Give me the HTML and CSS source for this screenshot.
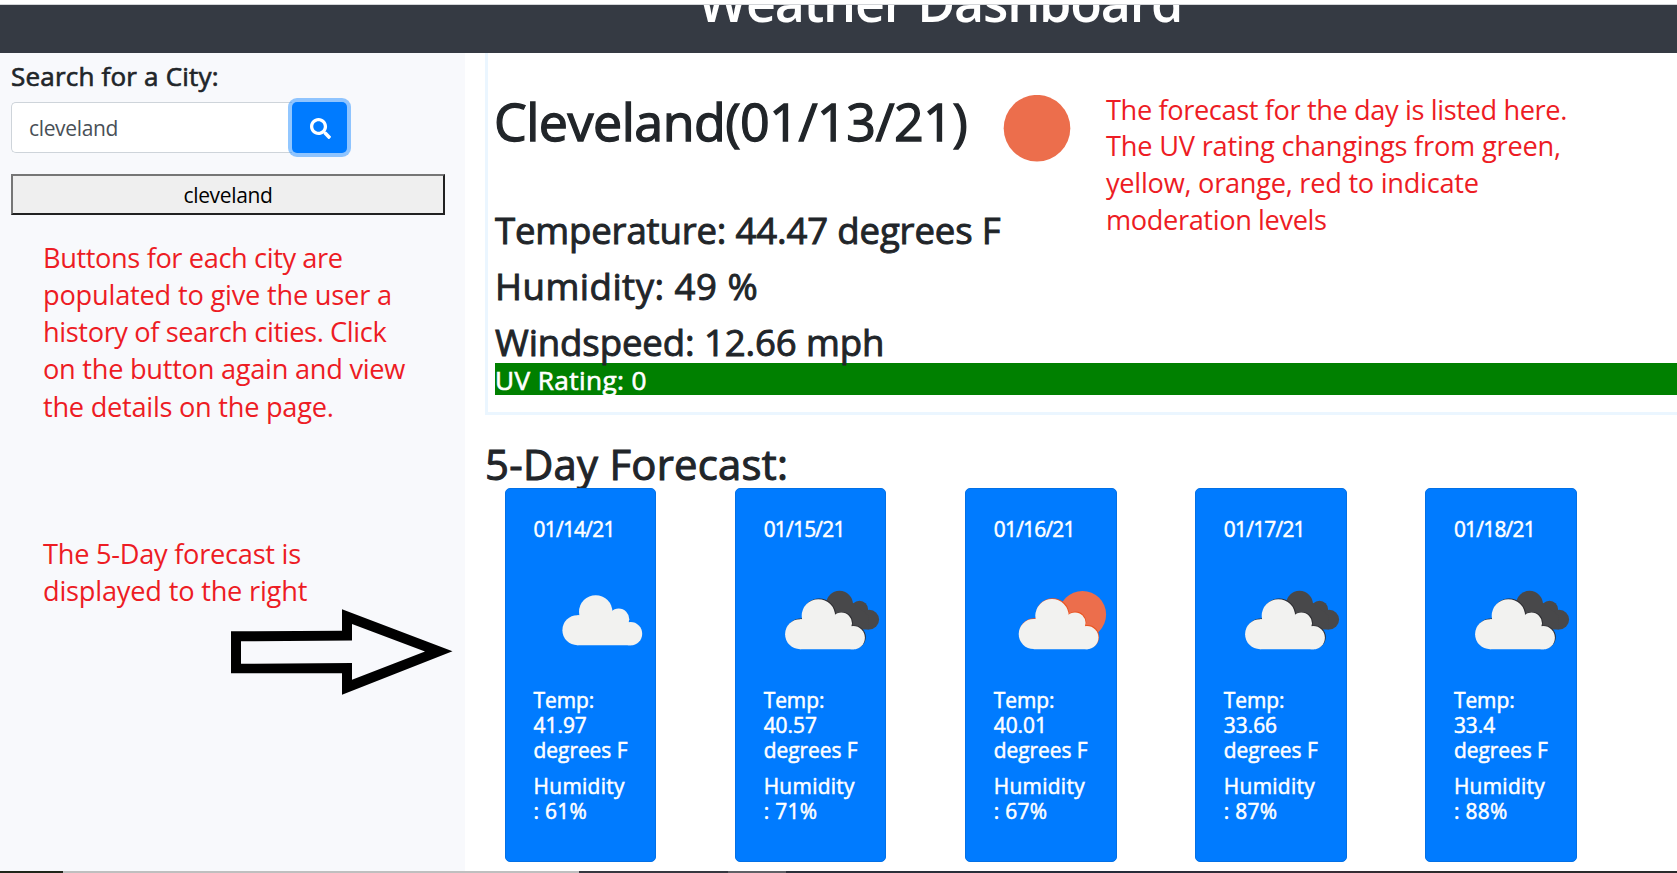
FILE: index.html
```html
<!DOCTYPE html>
<html lang="en">
<head>
<meta charset="utf-8">
<title>Weather Dashboard</title>
<link rel="stylesheet" href="styles.css">
</head>
<body>
<svg class="defs" aria-hidden="true">
  <defs>
    <g id="cloud">
      <circle cx="15" cy="35" r="15"/>
      <circle cx="33.3" cy="16.7" r="16.7"/>
      <circle cx="56.3" cy="24" r="10.6"/>
      <circle cx="68.2" cy="38.5" r="11.6"/>
      <path d="M15 20H33V16.7H50V20L58 24L66 27L69 30V50.1H15Z"/>
    </g>
    <symbol id="clouds" viewBox="0 0 133 133">
      <g fill="#48484a">
        <circle cx="75.5" cy="51.2" r="13.4"/>
        <circle cx="95.5" cy="56.4" r="8.6"/>
        <circle cx="105.300" cy="66.600" r="9.800"/>
        <path d="M75 50H89L104 62L105 76.400H79Z"/>
      </g>
      <use href="#cloud" x="22.000" y="45.600" fill="#2c2c30"/>
      <use href="#cloud" x="21.100" y="46.200" fill="#f2f2f0"/>
    </symbol>
  </defs>
</svg>
<div class="topline"></div>
<header class="header"><h1 class="title">Weather Dashboard</h1></header>
<main class="main">
  <aside class="sidebar">
    <h5 class="search-label">Search for a City:</h5>
    <div class="search">
      <div class="search-input">cleveland</div>
      <button class="search-btn" aria-label="Search">
        <svg width="21" height="21" viewBox="0 0 512 512"><path fill="#fff" d="M505 442.7L405.3 343c-4.500-4.500-10.600-7-17-7H372c27.600-35.300 44-79.700 44-128C416 93.100 322.900 0 208 0S0 93.100 0 208s93.100 208 208 208c48.300 0 92.700-16.400 128-44v16.300c0 6.400 2.500 12.500 7 17l99.700 99.700c9.400 9.400 24.600 9.400 33.900 0l28.300-28.300c9.400-9.400 9.400-24.600.1-34zM208 336c-70.700 0-128-57.200-128-128 0-70.700 57.200-128 128-128 70.700 0 128 57.200 128 128 0 70.700-57.200 128-128 128z"/></svg>
      </button>
    </div>
    <button class="city-btn">cleveland</button>
    <div class="note note-history">
      <div class="ls-d">Buttons for each city are</div>
      <div class="ls-a">populated to give the user a</div>
      <div class="ls-d">history of search cities. Click</div>
      <div class="ls-b">on the button again and view</div>
      <div class="ls-b">the details on the page.</div>
    </div>
    <div class="note note-forecast">
      <div class="ls-b">The 5-Day forecast is</div>
      <div class="ls-a">displayed to the right</div>
    </div>
    <svg class="arrow" width="222" height="87" viewBox="0 0 222 87"><path fill="#000" fill-rule="evenodd" d="M0 22.300L111 21.800V.2L221.500 42.300L111 85.700V64.200H0ZM10 32.300V54.800L121 54V70.700L194 42.500L121 15V31.500Z"/></svg>
  </aside>
  <section class="content">
    <div class="current">
      <div class="current-top">
        <h1 class="city">Cleveland(01/13/21)</h1>
        <svg class="sun" width="68" height="68" viewBox="0 0 68 68"><circle cx="34" cy="33.200" r="33.300" fill="#ec6e4c"/></svg>
        <div class="note note-today">
          <div class="ls-d">The forecast for the day is listed here.</div>
          <div class="ls-a">The UV rating changings from green,</div>
          <div class="ls-b">yellow, orange, red to indicate</div>
          <div class="ls-d">moderation levels</div>
        </div>
      </div>
      <div class="stats">
        <h3 class="stat stat-temp">Temperature: 44.47 degrees F</h3>
        <h3 class="stat stat-hum">Humidity: 49 %</h3>
        <h3 class="stat stat-wind">Windspeed: 12.66 mph</h3>
      </div>
      <h5 class="uv">UV Rating: 0</h5>
    </div>
    <h2 class="forecast-title">5-Day Forecast:</h2>
    <div class="cards">
      <article class="card">
        <h5 class="date">01/14/21</h5>
        <svg class="icon" viewBox="0 0 133 133"><use href="#cloud" x="28.400" y="42.200" fill="#f2f2f0"/></svg>
        <div class="temp">Temp:<br>41.97<br>degrees F</div>
        <div class="hum">Humidity<br>: 61%</div>
      </article>
      <article class="card">
        <h5 class="date">01/15/21</h5>
        <svg class="icon" viewBox="0 0 133 133"><use href="#clouds"/></svg>
        <div class="temp">Temp:<br>40.57<br>degrees F</div>
        <div class="hum">Humidity<br>: 71%</div>
      </article>
      <article class="card">
        <h5 class="date">01/16/21</h5>
        <svg class="icon" viewBox="0 0 133 133"><circle cx="88.500" cy="61.500" r="23.600" fill="#ec6e4c"/><use href="#cloud" x="25.400" y="45.200" fill="#ea5420"/><use href="#cloud" x="24.700" y="46.100" fill="#f2f2f0"/></svg>
        <div class="temp">Temp:<br>40.01<br>degrees F</div>
        <div class="hum">Humidity<br>: 67%</div>
      </article>
      <article class="card">
        <h5 class="date">01/17/21</h5>
        <svg class="icon" viewBox="0 0 133 133"><use href="#clouds"/></svg>
        <div class="temp">Temp:<br>33.66<br>degrees F</div>
        <div class="hum">Humidity<br>: 87%</div>
      </article>
      <article class="card">
        <h5 class="date">01/18/21</h5>
        <svg class="icon" viewBox="0 0 133 133"><use href="#clouds"/></svg>
        <div class="temp">Temp:<br>33.4<br>degrees F</div>
        <div class="hum">Humidity<br>: 88%</div>
      </article>
    </div>
  </section>
</main>
<footer class="taskbar"></footer>
</body>
</html>
```
FILE: styles.css
```css
* { box-sizing: border-box; }
body {
  margin: 0;
  height: 873px;
  overflow: hidden;
  display: flex;
  flex-direction: column;
  background: #fff;
  color: #212529;
  font-family: "Open Sans", "Noto Sans", sans-serif;
}
/* A thin stroke thickens the regular weight to a medium one. */
h1, h2, h3, h5 { margin: 0; font-weight: 400; white-space: nowrap; -webkit-text-stroke: 0.025em currentColor; }
svg { display: block; flex: none; }
.defs { position: absolute; width: 0; height: 0; }
.topline { height: 5px; flex: none; border-bottom: 1px solid #d3d5d8; }
.header { height: 48px; flex: none; overflow: hidden; background: #353a43; padding-left: 698px; }
.title { margin-top: -35px; font-size: 52px; line-height: 64px; color: #fff; font-weight: 600; letter-spacing: -1.2px; -webkit-text-stroke: 0; }
.main { display: flex; height: 818px; flex: none; }

.sidebar { width: 465px; flex: none; padding: 7px 20px 0 11px; background: #f8f9fc; }
.search-label { font-size: 26px; line-height: 32px; letter-spacing: 0.2px; margin-bottom: 10px; }
.search { display: flex; height: 51px; margin-bottom: 21px; }
.search-input {
  width: 281px;
  border: 1px solid #ced4da;
  border-right: 0;
  border-radius: 5px 0 0 5px;
  background: #fff;
  color: #495057;
  padding-left: 17px;
  font-size: 21px;
  line-height: 50px;
  letter-spacing: -0.35px;
}
.search-btn {
  width: 55px;
  display: flex;
  align-items: center;
  justify-content: center;
  padding: 0 0 0 1px;
  border: 0;
  border-radius: 5px;
  background: #007bff;
  box-shadow: 0 0 0 4px rgba(38, 143, 255, 0.5);
}
.search-btn svg { margin-top: 2px; }
.city-btn {
  display: block;
  width: 434px;
  height: 41px;
  padding: 2px 0 0;
  border: 2px solid;
  border-color: #767676 #212121 #212121 #767676;
  background: #efefef;
  color: #000;
  font-family: inherit;
  font-size: 21px;
  line-height: 35px;
  letter-spacing: -0.35px;
}

.note { color: #ed1c24; font-size: 27.2px; line-height: 37.15px; white-space: nowrap; }
.ls-a { letter-spacing: -0.2px; }
.ls-b { letter-spacing: -0.26px; }
.ls-d { letter-spacing: -0.38px; }
.note-history { margin: 24px 0 0 32px; }
.note-forecast { margin: 110px 0 0 32px; }
.arrow { margin: 0 0 0 220px; }

.content { flex: 1; min-width: 0; padding-left: 20px; }
.current {
  height: 362px;
  padding-left: 7px;
  border-left: 3px solid #ebf6ff;
  border-bottom: 3px solid #ebf6ff;
}
.current-top { display: flex; align-items: flex-start; height: 155px; }
.city { width: 509px; padding-top: 36px; margin-left: -1px; font-size: 52px; line-height: 64px; letter-spacing: -0.52px; }
.sun { margin-top: 42px; }
.note-today { margin: 38.5px 0 0 35px; line-height: 36.8px; }
.stats { display: flex; flex-direction: column; gap: 11px; height: 155px; }
.stat { font-size: 36.6px; line-height: 44.8px; }
.stat-temp { letter-spacing: -0.17px; }
.stat-hum { letter-spacing: 0.5px; }
.stat-wind { letter-spacing: -0.116px; }
.uv { height: 32px; background: #008000; color: #fff; font-size: 26.2px; line-height: 34px; letter-spacing: 0.4px; }
.forecast-title { margin-top: 23px; height: 50px; font-size: 41.8px; line-height: 51.2px; letter-spacing: 0.28px; }

.cards { display: flex; gap: 78.7px; padding-left: 20px; position: relative; }
.card {
  width: 151.4px;
  height: 374px;
  flex: none;
  padding: 27.7px 0 0 27.6px;
  border: 1px solid #0270e6;
  border-radius: 5px;
  background: #007bff;
  color: #fff;
  font-size: 20.9px;
  line-height: 24.85px;
  white-space: nowrap;
  -webkit-text-stroke: 0.025em currentColor;
}
.date { font-size: inherit; line-height: 25px; letter-spacing: -0.75px; }
.icon { width: 133px; height: 133px; margin-top: 11.8px; overflow: visible; }
.temp { margin-top: 1.9px; letter-spacing: -0.02px; }
.hum { margin-top: 11.4px; letter-spacing: 0.3px; }

.taskbar {
  height: 2px;
  flex: none;
  background: linear-gradient(90deg, #20261a 0 63px, #bfbfbf 63px 579px, #363840 579px 728px, #606166 728px 786px, #2b303a 786px 900px, #232c3a 1100px, #3a2e38 1310px, #2a2b2c 1450px);
}
```
